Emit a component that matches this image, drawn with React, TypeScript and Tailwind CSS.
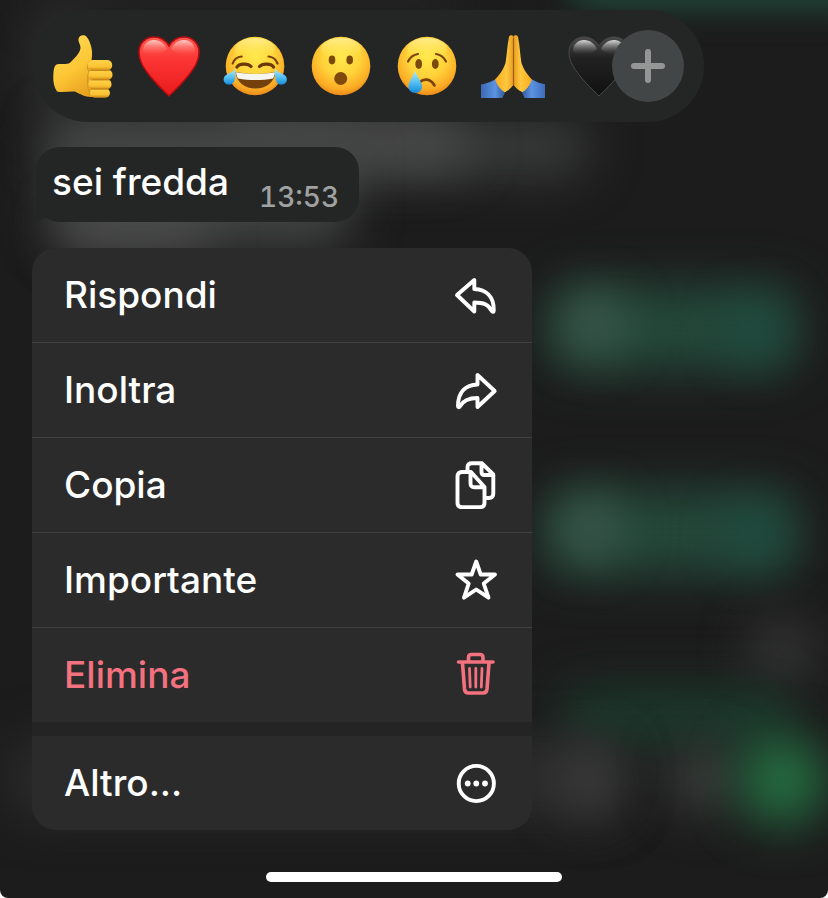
import type { ReactNode } from "react";

const backdrop = [
  "left-[40px] top-[-12px] h-[24px] w-[420px] rounded-full bg-[#2a2a2a] blur-xl",
  "left-[570px] top-[-30px] h-[38px] w-[300px] rounded-full bg-[#20493c] blur-lg",
  "left-[30px] top-[10px] h-[110px] w-[60px] rounded-full bg-[#2f2f2f] blur-xl",
  "left-[50px] top-[118px] h-[58px] w-[540px] rounded-full bg-[#393b3a] blur-xl",
  "left-[230px] top-[118px] h-[50px] w-[240px] rounded-full bg-[#4a4b4a] blur-xl",
  "left-[50px] top-[116px] h-[130px] w-[300px] rounded-3xl bg-[#434544] blur-xl",
  "left-[60px] top-[212px] h-[36px] w-[150px] rounded-full bg-[#505050] blur-xl",
  "left-[550px] top-[286px] h-[84px] w-[246px] rounded-3xl bg-[#24493b] blur-xl",
  "left-[564px] top-[294px] h-[60px] w-[60px] rounded-full bg-[#3f5c4e] blur-xl",
  "left-[730px] top-[304px] h-[56px] w-[54px] rounded-full bg-[#1e4d41] blur-xl",
  "left-[546px] top-[490px] h-[84px] w-[250px] rounded-3xl bg-[#24493b] blur-xl",
  "left-[560px] top-[498px] h-[60px] w-[60px] rounded-full bg-[#3f5c4e] blur-xl",
  "left-[730px] top-[508px] h-[56px] w-[54px] rounded-full bg-[#1e4d41] blur-xl",
  "left-[748px] top-[620px] h-[60px] w-[68px] rounded-full bg-[#363636] blur-xl",
  "left-[560px] top-[690px] h-[54px] w-[230px] rounded-3xl bg-[#1c3c2e] blur-xl",
  "left-[10px] top-[740px] h-[76px] w-[610px] rounded-3xl bg-[#2c2c2c] blur-xl",
  "left-[556px] top-[746px] h-[70px] w-[68px] rounded-full bg-[#3a3a3a] blur-xl",
  "left-[668px] top-[746px] h-[66px] w-[68px] rounded-full bg-[#3c3e3d] blur-xl",
  "left-[736px] top-[734px] h-[92px] w-[92px] rounded-full bg-[#246b40] blur-xl",
];

const HEART =
  "M32 62C29 59 22 53 13 42C6 33 2 27 2 18C2 9 9 3 17 3C24 3 29 7 32 12C35 7 40 3 47 3C55 3 62 9 62 18C62 27 58 33 51 42C42 53 35 59 32 62Z";

function Emoji({ children }: { children: ReactNode }) {
  return (
    <svg viewBox="0 0 64 64" className="block size-16" fill="none" aria-hidden="true">
      {children}
    </svg>
  );
}

function Gradients() {
  return (
    <svg className="absolute size-0" aria-hidden="true">
      <defs>
        <radialGradient id="face" cx="0.5" cy="0.35" r="0.65">
          <stop offset="0" stopColor="#ffe84a" />
          <stop offset="0.5" stopColor="#ffd33a" />
          <stop offset="0.85" stopColor="#fbaa24" />
          <stop offset="1" stopColor="#e8891b" />
        </radialGradient>
        <linearGradient id="shine" x1="0" y1="0" x2="0" y2="1">
          <stop offset="0" stopColor="#fff6ae" stopOpacity="0.7" />
          <stop offset="1" stopColor="#fff04f" stopOpacity="0" />
        </linearGradient>
        <linearGradient id="hand" x1="0" y1="0" x2="0.5" y2="1">
          <stop offset="0" stopColor="#ffd95a" />
          <stop offset="0.6" stopColor="#fdc735" />
          <stop offset="1" stopColor="#e9a422" />
        </linearGradient>
        <linearGradient id="finger" x1="0" y1="0" x2="0" y2="1">
          <stop offset="0" stopColor="#ffd34b" />
          <stop offset="0.65" stopColor="#fbc233" />
          <stop offset="1" stopColor="#cb8614" />
        </linearGradient>
        <linearGradient id="palm" x1="0" y1="0" x2="1" y2="0">
          <stop offset="0" stopColor="#f7a81c" />
          <stop offset="0.65" stopColor="#ffc83e" />
          <stop offset="1" stopColor="#e89b20" />
        </linearGradient>
        <linearGradient id="sleeve" x1="0" y1="0" x2="1" y2="0">
          <stop offset="0" stopColor="#3c69b5" />
          <stop offset="0.6" stopColor="#5b93e2" />
          <stop offset="1" stopColor="#32579b" />
        </linearGradient>
        <linearGradient id="tear" x1="0" y1="0" x2="0" y2="1">
          <stop offset="0" stopColor="#b9edfb" />
          <stop offset="0.5" stopColor="#5ac4f3" />
          <stop offset="1" stopColor="#158ada" />
        </linearGradient>
        <linearGradient id="red" x1="0" y1="0" x2="0" y2="1">
          <stop offset="0" stopColor="#ff5a50" />
          <stop offset="0.4" stopColor="#fb3434" />
          <stop offset="1" stopColor="#ea1a1c" />
        </linearGradient>
        <linearGradient id="redShine" x1="0" y1="0" x2="0" y2="1">
          <stop offset="0" stopColor="#ffd9d4" stopOpacity="0.9" />
          <stop offset="1" stopColor="#ff6a60" stopOpacity="0" />
        </linearGradient>
        <linearGradient id="black" x1="0" y1="0" x2="0" y2="1">
          <stop offset="0" stopColor="#4a4a4a" />
          <stop offset="0.35" stopColor="#222222" />
          <stop offset="1" stopColor="#101010" />
        </linearGradient>
        <linearGradient id="blackShine" x1="0" y1="0" x2="0" y2="1">
          <stop offset="0" stopColor="#ffffff" stopOpacity="0.8" />
          <stop offset="1" stopColor="#777777" stopOpacity="0" />
        </linearGradient>
      </defs>
    </svg>
  );
}

function Face() {
  return (
    <>
      <circle cx="32" cy="32" r="29.3" fill="url(#face)" />
      <ellipse cx="32" cy="15" rx="20" ry="11" fill="url(#shine)" />
    </>
  );
}

function ThumbsUp() {
  return (
    <Emoji>
      <path
        d="M27.5 5C28 1.500 31 .5 34 1.500C37 3 39.500 9 40.500 14C41.500 18 41 23 40.500 27H52V63H40C34 63 29 60 24 57.500C18 57 12 59 6 57.500C3 53 2 48 2.300 42C2.600 36 3 32 5.500 30.500C10 29 15 31 19 28.700C24 24 29 19 29.500 14C29.500 10 27 8 27.500 5Z"
        fill="url(#hand)"
      />
      <path d="M40 27C36 29 35.500 34 38 37C36 44 36 53 39 61" stroke="#d79a20" strokeWidth="1.500" />
      <rect x="39" y="54.500" width="20" height="9.200" rx="4.600" fill="url(#finger)" />
      <rect x="37.500" y="45" width="23" height="10.500" rx="5" fill="url(#finger)" />
      <rect x="37.500" y="35.500" width="24" height="10.500" rx="5" fill="url(#finger)" />
      <rect x="36.700" y="26" width="24.500" height="10.500" rx="5" fill="url(#finger)" />
      <path d="M39 36.500H59M40 46H59M40 55H58" stroke="#b97711" strokeWidth="1" opacity="0.7" />
    </Emoji>
  );
}

function RedHeart() {
  return (
    <Emoji>
      <path d={HEART} fill="url(#red)" stroke="#b80b10" strokeWidth="1.500" />
      <path d="M6 17C6 10 11 6 17 6C23 6 28 10 30 15C25 21 8 24 6 17Z" fill="url(#redShine)" />
      <path d="M58 17C58 10 53 6 47 6C41 6 36 10 34 15C39 21 56 24 58 17Z" fill="url(#redShine)" />
    </Emoji>
  );
}

function Joy() {
  return (
    <Emoji>
      <Face />
      <path
        d="M9.700 29.500C11 25.500 14 22.800 18.700 22.500M45.500 22.500C50 22.800 53 25.500 54.500 29.500"
        stroke="#7a4208"
        strokeWidth="2.200"
        strokeLinecap="round"
      />
      <path
        d="M14 33C16 29.500 25 29 28 32.500M36.500 32.500C39.500 29 48.500 29.500 50.500 33"
        stroke="#6b3907"
        strokeWidth="3.200"
        strokeLinecap="round"
      />
      <path d="M12.500 38C25 40.500 40 40.500 52.500 38C51.500 48.500 43 54.500 32.500 54.500C22 54.500 13.500 48.500 12.500 38Z" fill="#74400c" />
      <path d="M13 38.300C25 40.500 40 40.500 52 38.300C51.700 41 51 43 50 44.500C39 46.500 26 46.500 15 44.500C14 43 13.300 41 13 38.300Z" fill="#f7f5f0" />
      <path d="M12.500 34.500C12.500 42 13 50 6.500 50.800C1 50.800 -.5 46 1.500 42.500C4.500 39 10 39 12.500 34.500Z" fill="url(#tear)" />
      <path d="M52 34.500C52 42 51.500 50 58 50.800C63.500 50.800 65 46 63 42.500C60 39 54.500 39 52 34.500Z" fill="url(#tear)" />
    </Emoji>
  );
}

function Wow() {
  return (
    <Emoji>
      <Face />
      <ellipse cx="23" cy="26" rx="3.300" ry="4.400" fill="#7b4a0b" />
      <ellipse cx="40.700" cy="26" rx="3.300" ry="4.400" fill="#7b4a0b" />
      <circle cx="31.700" cy="44.500" r="6.500" fill="#80490c" />
    </Emoji>
  );
}

function Crying() {
  return (
    <Emoji>
      <Face />
      <path
        d="M13 27.500C15 23.500 18.500 20.700 23 20M41 20C45.500 20.700 49 23.500 51 27.500"
        stroke="#7a4208"
        strokeWidth="2.200"
        strokeLinecap="round"
      />
      <ellipse cx="23.700" cy="30" rx="3.400" ry="5" fill="#7b4a0b" />
      <ellipse cx="40.300" cy="30" rx="3.400" ry="5" fill="#7b4a0b" />
      <path d="M25 48C28 45 35 43.500 39.500 51.500" stroke="#7a4208" strokeWidth="2.600" strokeLinecap="round" />
      <path d="M20 36.500C21.500 42 27 47.500 27 52.500C27 56.500 24 58.800 20.200 58.800C16.400 58.800 13.500 56.500 13.500 52.500C13.500 47.500 18.500 42 20 36.500Z" fill="url(#tear)" />
    </Emoji>
  );
}

function PrayHalf() {
  return (
    <>
      <path
        d="M32.500 2.500C31.500 .7 28.500 .8 28 3C26 12 26 21 24.500 29C22 37 17 42 13 47L22 59C27 57 30 54 32.500 51Z"
        fill="url(#palm)"
      />
      <path d="M14 45.500C10 48 5 49.500 0 50.500V64H21.500C22.500 62 23 60.500 24 58.500C19 55.500 16 51 14 45.500Z" fill="url(#sleeve)" />
    </>
  );
}

function Pray() {
  return (
    <Emoji>
      <PrayHalf />
      <g transform="translate(65 0) scale(-1 1)">
        <PrayHalf />
      </g>
      <path d="M32.500 4V51" stroke="#a25e0c" strokeWidth="1.200" />
    </Emoji>
  );
}

function BlackHeart() {
  return (
    <Emoji>
      <path d={HEART} fill="url(#black)" stroke="#494949" strokeWidth="1" />
      <path d="M6 17C6 10 11 6 17 6C23 6 28 10 30 15C25 21 8 22 6 17Z" fill="url(#blackShine)" />
      <path d="M58 17C58 10 53 6 47 6C41 6 36 10 34 15C39 21 56 22 58 17Z" fill="url(#blackShine)" />
    </Emoji>
  );
}

const reactions = [
  { label: "Mi piace", icon: <ThumbsUp /> },
  { label: "Cuore rosso", icon: <RedHeart /> },
  { label: "Risata", icon: <Joy /> },
  { label: "Stupore", icon: <Wow /> },
  { label: "Tristezza", icon: <Crying /> },
  { label: "Grazie", icon: <Pray /> },
  { label: "Cuore nero", icon: <BlackHeart /> },
];

function MenuIcon({ children }: { children: ReactNode }) {
  return (
    <svg
      viewBox="0 0 48 48"
      className="block size-12 shrink-0"
      fill="none"
      stroke="currentColor"
      strokeWidth="3.900"
      strokeLinecap="round"
      strokeLinejoin="round"
      aria-hidden="true"
    >
      {children}
    </svg>
  );
}

const actions = [
  {
    label: "Rispondi",
    icon: (
      <MenuIcon>
        <path d="M5 24L22.300 9V18C34 18.500 42 25.500 41.800 39.500C41.800 41 40.500 41.200 39.700 40C36.500 33.500 31.500 31.500 22.300 31.500V40.500Z" />
      </MenuIcon>
    ),
  },
  {
    label: "Inoltra",
    icon: (
      <MenuIcon>
        <path d="M42.700 25L25.500 9V18.500C13.500 19 6 26 6 40C6 41.400 7 41.800 7.800 40.500C11 34.500 16.500 32 25.500 32V41Z" />
      </MenuIcon>
    ),
  },
  {
    label: "Copia",
    icon: (
      <MenuIcon>
        <path d="M19 11H10C7 11 5.500 12.500 5.500 15.500V42C5.500 45 7 46.200 10 46.200H28C31 46.200 32.500 45 32.500 42V26L19 11ZM18.500 12V22C18.500 25 19.500 26.200 22.500 26.200H32" />
        <path d="M15.500 9V6.500C15.500 3.500 17 2.300 20 2.300H30L41.300 13.500V32.500C41.300 35.500 40 37 37 37H33.500M29.500 3V11C29.500 13 30.500 14 32.500 14H41" />
      </MenuIcon>
    ),
  },
  {
    label: "Importante",
    icon: (
      <MenuIcon>
        <path d="M24.200 5.500L28.700 18.500H43L31.700 27.500L36.500 41.700L24.200 33.500L12 41.700L16.700 27.500L5.500 18.500H19.700Z" />
      </MenuIcon>
    ),
  },
  {
    label: "Elimina",
    danger: true,
    icon: (
      <MenuIcon>
        <path d="M6.500 11H41M16.500 10V6.500C16.500 4.300 17.500 3.500 19.500 3.500H28C30 3.500 31 4.300 31 6.500V10M10.500 12L12.500 38C12.800 41 14 42 16.500 42H31C33.500 42 34.700 41 35 38L37 12" strokeWidth="3.600" />
        <path d="M17.500 17.500L18.200 36M23.800 17.500V36M30 17.500L29.300 36" strokeWidth="2.800" />
      </MenuIcon>
    ),
  },
];

const ROW = "flex w-full items-center justify-between bg-[#2b2b2b] px-8 text-left";
const LABEL = "text-[37px] leading-[46px] font-medium";

export default function App() {
  return (
    <div className="bg-white font-['Inter',sans-serif] text-white">
      <div className="relative isolate flex min-h-screen flex-col overflow-hidden rounded-b-lg bg-[#1c1c1c] px-8 pt-[10px] pb-4">
        <Gradients />

        {/* blurred conversation behind the menu */}
        <div className="absolute inset-0 -z-10" aria-hidden="true">
          {backdrop.map((blob) => (
            <div key={blob} className={`absolute ${blob}`} />
          ))}
        </div>

        <div className="flex h-28 w-fit items-center rounded-full bg-[#242625] pr-5 pl-[19px]">
          <div className="flex gap-[22px]">
            {reactions.map((reaction) => (
              <button key={reaction.label} type="button" aria-label={reaction.label}>
                {reaction.icon}
              </button>
            ))}
          </div>
          <button
            type="button"
            aria-label="Altre reazioni"
            className="z-10 -ml-[19px] flex size-[72px] items-center justify-center rounded-full bg-[#434646]"
          >
            <svg viewBox="0 0 34 34" className="size-[34px]" aria-hidden="true">
              <path d="M17 3V31M3 17H31" stroke="#949696" strokeWidth="6" strokeLinecap="round" />
            </svg>
          </button>
        </div>

        <div className="relative mt-[25px] ml-1 flex h-[75px] w-fit items-end rounded-3xl bg-[#242625] pr-5 pl-4">
          <svg viewBox="0 0 24 24" className="absolute bottom-0 -left-1 size-6" aria-hidden="true">
            <path d="M4 0V12C4 17 3 20 0 22C5 23 10 22 13 19L24 12V0Z" fill="#242625" />
          </svg>
          <p className={`relative pb-[17px] ${LABEL}`}>sei fredda</p>
          <time className="ml-[30px] pb-2 text-[28px] leading-[34px] font-medium text-[#a0a1a1] tabular-nums">13:53</time>
        </div>

        <div role="menu" className="mt-[26px] w-[500px] max-w-full overflow-hidden rounded-3xl bg-[#242424]">
          <div className="divide-y divide-[#404040]">
            {actions.map((action) => (
              <button
                key={action.label}
                type="button"
                role="menuitem"
                className={`${ROW} h-[95px] last:h-[94px] ${action.danger ? "text-[#f4717f]" : ""}`}
              >
                <span className={LABEL}>{action.label}</span>
                {action.icon}
              </button>
            ))}
          </div>
          <button type="button" role="menuitem" className={`${ROW} mt-[14px] h-[94px]`}>
            <span className={LABEL}>Altro...</span>
            <MenuIcon>
              <circle cx="24.300" cy="24.500" r="17.600" />
              <g fill="currentColor" stroke="none">
                <circle cx="15.700" cy="24.500" r="2.900" />
                <circle cx="24.300" cy="24.500" r="2.900" />
                <circle cx="33" cy="24.500" r="2.900" />
              </g>
            </MenuIcon>
          </button>
        </div>

        <div className="mx-auto mt-auto h-[10px] w-[296px] rounded-full bg-white" />
      </div>
    </div>
  );
}
